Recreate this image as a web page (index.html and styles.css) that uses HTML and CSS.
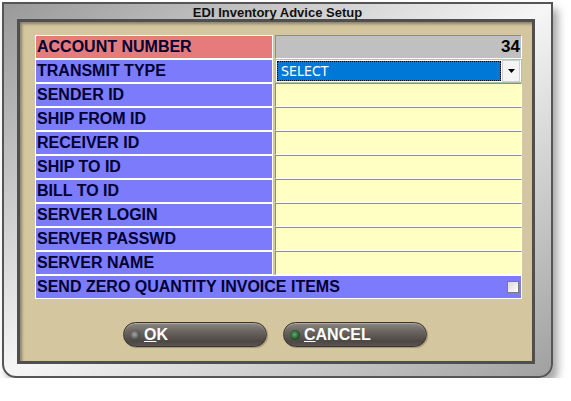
FILE: index.html
```html
<!DOCTYPE html>
<html>
<head>
<meta charset="utf-8">
<link rel="stylesheet" href="styles.css">
</head>
<body>
<div class="frame">
  <div class="title">EDI Inventory Advice Setup</div>
  <div class="panel">
    <div class="grid">
      <div class="lbl red">ACCOUNT NUMBER</div><div class="val gray">34</div>
      <div class="lbl">TRANSMIT TYPE</div>
      <div class="val sel">
        <div class="sel-box">SELECT</div>
        <div class="arrow"><svg width="7" height="4" viewBox="0 0 7 4"><path d="M0 0H7L3.5 4Z" fill="#000"/></svg></div>
      </div>
      <div class="lbl">SENDER ID</div><div class="val"></div>
      <div class="lbl">SHIP FROM ID</div><div class="val"></div>
      <div class="lbl">RECEIVER ID</div><div class="val"></div>
      <div class="lbl">SHIP TO ID</div><div class="val"></div>
      <div class="lbl">BILL TO ID</div><div class="val"></div>
      <div class="lbl">SERVER LOGIN</div><div class="val"></div>
      <div class="lbl">SERVER PASSWD</div><div class="val"></div>
      <div class="lbl">SERVER NAME</div><div class="val"></div>
      <div class="lbl wide">SEND ZERO QUANTITY INVOICE ITEMS<span class="chk"></span></div>
    </div>
    <div class="buttons">
      <div class="btn"><span class="dot"></span><span><u>O</u>K</span></div>
      <div class="btn"><span class="dot green"></span><span><u>C</u>ANCEL</span></div>
    </div>
  </div>
</div>
</body>
</html>
```
FILE: styles.css
```css
body {
  margin: 0;
  background: #fff;
  font-family: "Liberation Sans", Arial, sans-serif;
}
.frame {
  margin: 2px 0 0 2px;
  width: 551px;
  height: 376px;
  box-sizing: border-box;
  border: 2px solid #555;
  border-radius: 0 0 14px 14px;
  background: linear-gradient(to bottom right, #999, #f6f6f6 50%, #a0a0a0);
  box-shadow: 5px 7px 9px rgba(0, 0, 0, 0.35);
}
.title {
  height: 12px;
  padding-top: 3px;
  line-height: 12px;
  font-size: 13px;
  font-weight: bold;
  text-align: center;
  color: #111;
}
.panel {
  margin-left: 13px;
  width: 518px;
  height: 345px;
  box-sizing: border-box;
  border: 3px solid #4f4f4f;
  background: #d4c69e;
  box-shadow: inset 2px 2px 3px rgba(0, 0, 0, 0.35);
  padding: 13px 0 0 15px;
}
.grid {
  display: grid;
  grid-template-columns: 238px 247px;
  column-gap: 2px;
}
.lbl {
  height: 24px;
  box-sizing: border-box;
  border: 1px solid #fff;
  background: #7b7bfb;
  color: #000033;
  font-size: 16px;
  font-weight: bold;
  line-height: 22px;
  padding-left: 1px;
  white-space: nowrap;
}
.red {
  background: #e67b7b;
}
.val {
  height: 24px;
  box-sizing: border-box;
  border: 1px solid;
  border-color: #8c8c8c #fff #fff #8c8c8c;
  background: #ffffc4;
}
.gray {
  background: #c0c0c0;
  text-align: right;
  font-size: 17px;
  font-weight: bold;
  line-height: 22px;
  padding-right: 1px;
  color: #000;
}
.sel {
  display: flex;
  background: #fff;
  border-color: #a9c4a9;
  padding: 1px;
}
.sel-box {
  flex: 1;
  background: #0078d7;
  border: 1px dotted #000;
  color: #fff;
  font-family: "Liberation Sans Narrow", "DejaVu Sans Condensed", sans-serif;
  font-size: 14px;
  line-height: 18px;
  padding-left: 3px;
  margin-right: 1px;
}
.arrow {
  width: 16px;
  background: #f4f4f4;
  border: 1px solid #d0d0d0;
  margin: -1px 0;
  display: flex;
  align-items: center;
  justify-content: center;
}
.wide {
  grid-column: 1 / -1;
  display: flex;
  justify-content: space-between;
  align-items: center;
  padding-right: 2px;
}
.chk {
  width: 12px;
  height: 12px;
  box-sizing: border-box;
  border: 1px solid #7a7a7a;
  background: linear-gradient(135deg, #d8d8d8, #fff);
}
.buttons {
  display: flex;
  gap: 16px;
  margin-top: 23px;
  padding-left: 88px;
}
.btn {
  width: 144px;
  height: 25px;
  box-sizing: border-box;
  border-radius: 12.5px;
  border: 1px solid #3a3531;
  background: linear-gradient(#8d8782, #6c6661 35%, #4e4844 80%, #5a5550);
  box-shadow: inset 0 1px 1px rgba(255, 255, 255, 0.3), 1px 1px 1px rgba(0, 0, 0, 0.25);
  display: flex;
  align-items: center;
  padding-left: 6px;
  color: #fff;
  font-weight: bold;
  font-size: 16px;
}
.dot {
  width: 10px;
  height: 10px;
  border-radius: 50%;
  margin-right: 4px;
  background: radial-gradient(circle at 45% 45%, #a8a8a8, #3e3e3e 75%);
}
.dot.green {
  background: radial-gradient(circle at 45% 45%, #5fae6c, #143d1c 75%);
}
```
